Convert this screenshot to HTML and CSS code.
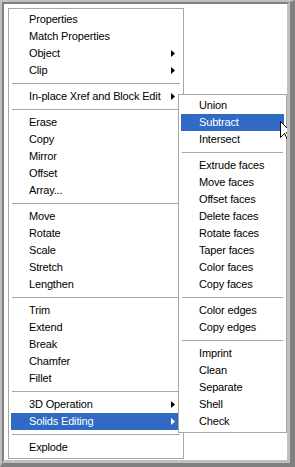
FILE: index.html
```html
<!DOCTYPE html>
<html>
<head>
<meta charset="utf-8">
<link rel="stylesheet" href="styles.css">
</head>
<body>
<div class="frame">
  <div class="screen">
    <div class="menu main">
      <div class="item">Properties</div>
      <div class="item">Match Properties</div>
      <div class="item">Object<svg class="arrow" viewBox="0 0 4 7"><polygon points="0,0 4,3.5 0,7"/></svg></div>
      <div class="item">Clip<svg class="arrow" viewBox="0 0 4 7"><polygon points="0,0 4,3.5 0,7"/></svg></div>
      <div class="sep"></div>
      <div class="item">In-place Xref and Block Edit<svg class="arrow" viewBox="0 0 4 7"><polygon points="0,0 4,3.5 0,7"/></svg></div>
      <div class="sep"></div>
      <div class="item">Erase</div>
      <div class="item">Copy</div>
      <div class="item">Mirror</div>
      <div class="item">Offset</div>
      <div class="item">Array...</div>
      <div class="sep"></div>
      <div class="item">Move</div>
      <div class="item">Rotate</div>
      <div class="item">Scale</div>
      <div class="item">Stretch</div>
      <div class="item">Lengthen</div>
      <div class="sep"></div>
      <div class="item">Trim</div>
      <div class="item">Extend</div>
      <div class="item">Break</div>
      <div class="item">Chamfer</div>
      <div class="item">Fillet</div>
      <div class="sep"></div>
      <div class="item">3D Operation<svg class="arrow" viewBox="0 0 4 7"><polygon points="0,0 4,3.5 0,7"/></svg></div>
      <div class="item active">Solids Editing<svg class="arrow" viewBox="0 0 4 7"><polygon points="0,0 4,3.5 0,7"/></svg></div>
      <div class="sep"></div>
      <div class="item">Explode</div>
    </div>

    <div class="menu submenu">
      <div class="item">Union</div>
      <div class="item active">Subtract</div>
      <div class="item">Intersect</div>
      <div class="sep"></div>
      <div class="item">Extrude faces</div>
      <div class="item">Move faces</div>
      <div class="item">Offset faces</div>
      <div class="item">Delete faces</div>
      <div class="item">Rotate faces</div>
      <div class="item">Taper faces</div>
      <div class="item">Color faces</div>
      <div class="item">Copy faces</div>
      <div class="sep"></div>
      <div class="item">Color edges</div>
      <div class="item">Copy edges</div>
      <div class="sep"></div>
      <div class="item">Imprint</div>
      <div class="item">Clean</div>
      <div class="item">Separate</div>
      <div class="item">Shell</div>
      <div class="item">Check</div>
    </div>

    <svg class="cursor" viewBox="0 0 12 19" width="12" height="19">
      <path d="M0.5 0.5 L0.5 16.5 L4.5 12.5 L7.5 18.5 L9.5 17.5 L6.5 11.5 L11.5 11.5 Z" fill="#fff" stroke="#000" stroke-width="1"/>
    </svg>
  </div>
</div>
</body>
</html>
```
FILE: styles.css
```css
html, body {
  margin: 0;
  padding: 0;
  background: #fff;
}

.frame {
  width: 295px;
  height: 467px;
  box-sizing: border-box;
  border-top: 2px solid #c0c0c0;
  border-left: 2px solid #c0c0c0;
  border-right: 5px solid #808080;
  border-bottom: 4px solid #808080;
}

.screen {
  position: relative;
  height: 100%;
  box-sizing: border-box;
  border-top: 2px solid #808080;
  border-left: 2px solid #808080;
  border-right: 3px solid #c0c0c0;
  border-bottom: 3px solid #c0c0c0;
  background: #fff;
  padding: 4px;
  overflow: hidden;
  font-family: "Liberation Sans", Arial, sans-serif;
  font-size: 11px;
  letter-spacing: -0.15px;
  color: #000;
}

.menu {
  box-sizing: border-box;
  border: 1px solid #aca899;
  padding: 2px;
  background: #fff;
}

.main {
  width: 176px;
}

.submenu {
  position: absolute;
  left: 174px;
  top: 90px;
  width: 109px;
}

.item {
  height: 17px;
  line-height: 17px;
  padding-left: 18px;
  padding-right: 6px;
  display: flex;
  align-items: center;
  justify-content: space-between;
  white-space: nowrap;
}

.item.active {
  background: #316ac5;
  color: #fff;
}

.arrow {
  width: 4px;
  height: 7px;
  fill: #000;
  flex: none;
}

.item.active .arrow {
  fill: #fff;
}

.sep {
  height: 1px;
  background: #aca899;
  margin: 4px 1px;
}

.cursor {
  position: absolute;
  left: 276px;
  top: 117px;
}
```
